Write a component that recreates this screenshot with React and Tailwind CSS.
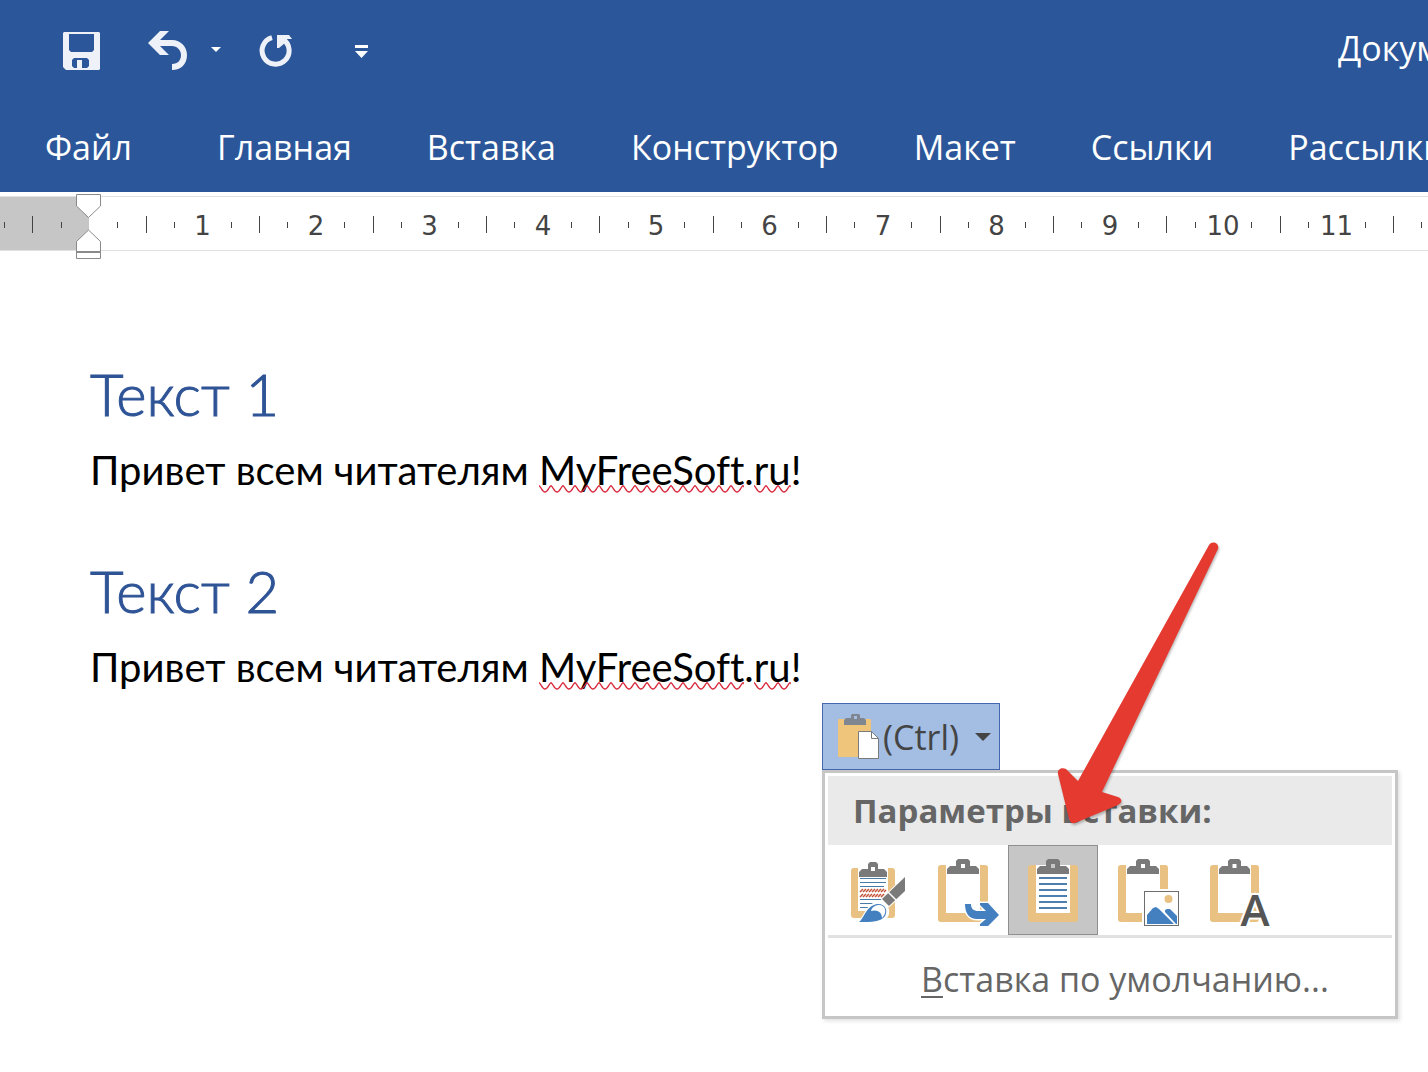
import React from 'react';

const TABS = ['Файл', 'Главная', 'Вставка', 'Конструктор', 'Макет', 'Ссылки', 'Рассылки'];

// One centimetre on the ruler, in pixels
const CM = 113.4;

const SaveIcon = () => (
    <svg width="40" height="40" viewBox="0 0 40 40" fill="#eef1f7">
        <path fillRule="evenodd" d="M2 2H37L38 3V39L37 40H4L1 37V3ZM7 4V20L9 22H30L32 20V4ZM12 28L10 30V36L12 38H15V30H20V38H25L27 36V30L25 28Z" />
    </svg>
);

const UndoIcon = () => (
    <svg width="42" height="40" viewBox="0 0 42 40">
        <path d="M14 1H23L14 10H26C35 10 41 17 41 25C41 34 35 40 26 40V34C32 34 35 30 35 25C35 20 31 16 26 16H14L23 25H14L2 13Z" fill="#eef1f7" />
    </svg>
);

const RedoIcon = () => (
    <svg width="36" height="36" viewBox="0 0 36 36">
        <path d="M14 5.600A13.500 13.500 0 1 0 24.500 7" fill="none" stroke="#eef1f7" strokeWidth="5" />
        <path d="M19 3H31L34 7H27V11L21 16H19Z" fill="#eef1f7" />
    </svg>
);

const Clip = ({ x = 29, y = 14, w = 32, hole = '#fff' }) => (
    <g>
        <path
            d={`M${x} ${y + 15}V${y + 10}L${x + 3} ${y + 7}H${x + 9}V${y + 2}L${x + 11} ${y}H${x + w - 11}L${x + w - 9} ${y + 2}V${y + 7}H${x + w - 3}L${x + w} ${y + 10}V${y + 15}Z`}
            fill="#7a7a7a"
        />
        <rect x={x + w / 2 - 2} y={y + 5} width="4" height="4" fill={hole} />
    </g>
);

const Board = ({ x = 20, w = 50 }) => (
    <g>
        <rect x={x} y="20" width={w} height="57" rx="3" fill="#e9c182" />
        <rect x={x + 8} y="20" width={w - 16} height="48" fill="#fff" />
    </g>
);

const KeepSourceIcon = () => (
    <svg width="90" height="90" viewBox="0 0 90 90">
        <rect x="23" y="23" width="44" height="50" rx="3" fill="#e9c182" />
        <rect x="30" y="22" width="30" height="44" fill="#fff" />
        <Clip x={31} y={17} w={28} />
        <path d="M32 33.500H58M32 37.500H58M32 41.500H56M32 54.500H58M32 58.500H50M32 62.500H44" stroke="#4a7ba6" strokeWidth="1" />
        <path
            d="M32 47L35 44M35 47L38 44M38 47L41 44M41 47L44 44M44 47L47 44M47 47L50 44M50 47L53 44M53 47L56 44M56 47L58 45M32 52L35 49M35 52L38 49M38 52L41 49M41 52L44 49M44 52L47 49M47 52L50 49M50 52L53 49M53 52L56 49M56 52L58 50"
            stroke="#c4533a"
            strokeWidth="1.500"
        />
        <path d="M77 32V46L61 61L54 54Z" fill="#7a7a7a" stroke="#fff" strokeWidth="2" paintOrder="stroke" />
        <path d="M60 47L68 55" stroke="#fff" strokeWidth="1.500" />
        <path d="M31 77C38 73 38 59 51 58C60 58 62 68 57 73C52 78 44 77 31 77Z" fill="#fff" stroke="#fff" strokeWidth="3" />
        <path d="M31 77C36 74 38 60 50 59C58 59 60 66 57 71C53 77 44 77 31 77Z" fill="#4480c0" />
        <path d="M43 66C45 59 55 58 57 64C58 68 56 71 54 73C54 67 49 64 43 66Z" fill="#fff" />
    </svg>
);

const MergeIcon = () => (
    <svg width="90" height="90" viewBox="0 0 90 90">
        <Board />
        <Clip />
        <path
            d="M47 59H53C53 64 56 66 60 66H68L62 60V58H70L81 70L70 81H62V79L68 74H59C51 74 47 68 47 59Z"
            fill="#4480c0"
            stroke="#fff"
            strokeWidth="3"
            paintOrder="stroke"
        />
    </svg>
);

const TextOnlyIcon = () => (
    <svg width="90" height="90" viewBox="0 0 90 90">
        <Board />
        <Clip hole="#c6c6c6" />
        <path d="M31 33H59M31 39H59M31 45H59M31 51H59M31 57H59M31 63H59" stroke="#4f7fae" strokeWidth="2" />
    </svg>
);

const PictureIcon = () => (
    <svg width="90" height="90" viewBox="0 0 90 90">
        <Board />
        <Clip />
        <rect x="44" y="44" width="39" height="39" fill="#fff" />
        <rect x="46.500" y="46.500" width="34" height="34" fill="#fff" stroke="#6e6e6e" />
        <circle cx="70.500" cy="54" r="4" fill="#e9c182" />
        <path d="M49 79V70L55 63L58 62L61 64L76 79Z" fill="#4480c0" />
        <path d="M67 67V65L69 64H72L79 71V79H78Z" fill="#4480c0" />
    </svg>
);

const KeepTextIcon = () => (
    <svg width="90" height="90" viewBox="0 0 90 90">
        <Board x={22} w={49} />
        <Clip x={31} w={31} />
        <text
            x="67"
            y="81"
            textAnchor="middle"
            fill="#555"
            stroke="#fff"
            strokeWidth="4"
            paintOrder="stroke"
            className="font-['Open_Sans',sans-serif] text-[44px] font-semibold"
        >
            A
        </text>
    </svg>
);

const PASTE_OPTIONS = [
    { label: 'Сохранить исходное форматирование', Icon: KeepSourceIcon },
    { label: 'Объединить форматирование', Icon: MergeIcon },
    { label: 'Использовать конечные стили', Icon: TextOnlyIcon, active: true },
    { label: 'Рисунок', Icon: PictureIcon },
    { label: 'Сохранить только текст', Icon: KeepTextIcon },
];

const Header = () => (
    <header className="h-48 overflow-hidden bg-[#2b579a] font-['Open_Sans','Noto_Sans',sans-serif] text-[34px] text-white">
        <div className="flex h-[100px] items-center pl-[62px]">
            <button type="button" aria-label="Сохранить"><SaveIcon /></button>
            <button type="button" aria-label="Отменить" className="ml-11"><UndoIcon /></button>
            <button type="button" aria-label="Список отмены" className="ml-5">
                <svg width="16" height="6" viewBox="0 0 16 6"><path d="M3 0H13L8 5Z" fill="#fff" /></svg>
            </button>
            <button type="button" aria-label="Повторить" className="ml-[34px]"><RedoIcon /></button>
            <button type="button" aria-label="Настройка панели" className="ml-[59px]">
                <svg width="16" height="16" viewBox="0 0 16 16" fill="#fff"><path d="M2 3H15V6H2ZM2 9H15L8.500 16Z" /></svg>
            </button>
            <span className="ml-auto w-[90px] overflow-hidden pb-1 whitespace-nowrap">Документ1</span>
        </div>
        <nav className="flex h-[94px] items-center gap-[75px] pl-[45px] whitespace-nowrap">
            {TABS.map((tab) => (
                <a key={tab} href="#" className="first:mr-[10px]">{tab}</a>
            ))}
        </nav>
    </header>
);

const Tick = ({ k }) => {
    const width = Math.round(((k + 1) * CM) / 4) - Math.round((k * CM) / 4);
    return (
        <div className="flex shrink-0 items-center justify-center" style={{ width }}>
            {k % 4 === 0
                ? <span className="pt-1">{k / 4}</span>
                : <span className={k % 2 === 0 ? 'h-[17px] w-px bg-[#444]' : 'h-[6px] w-px bg-[#444]'} />}
        </div>
    );
};

const Ruler = () => {
    const marks = Array.from({ length: 47 }, (_, i) => i + 1);
    return (
        <div className="relative pt-1">
            <div className="flex h-[55px] overflow-hidden border-y border-[#e1e1e1] font-['DejaVu_Sans',sans-serif] text-[26px] text-[#444]">
                <div className="flex w-[89px] shrink-0 justify-end bg-[#c6c6c6] pt-0.5 pr-[14px]">
                    {[-3, -2, -1].map((k) => <Tick key={k} k={k} />)}
                </div>
                <div className="flex min-w-0 flex-1 overflow-hidden pt-0.5 pl-[14px]">
                    {marks.map((k) => <Tick key={k} k={k} />)}
                </div>
            </div>
            {/* indent markers */}
            <svg className="absolute top-0.5 left-[76px]" width="26" height="66" viewBox="0 0 26 66" fill="#fff" stroke="#8a8a8a">
                <path d="M.5 .5H24.500V12L12.500 23.500L.5 12Z" />
                <path d="M12.500 36L24.500 47.500V64.500H.5V47.500Z" />
                <path d="M.5 58H24.500" strokeWidth="2" />
            </svg>
        </div>
    );
};

// Spelling squiggle under a word
const Misspelled = ({ id, children }) => (
    <span className="relative">
        {children}
        <svg className="absolute bottom-px left-0 h-2 w-full" aria-hidden="true">
            <defs>
                <pattern id={id} width="12" height="8" patternUnits="userSpaceOnUse">
                    <path d="M-1 0C2 1 3 7 6 7S10 1 13 0" fill="none" stroke="#d8283c" strokeWidth="1.300" />
                </pattern>
            </defs>
            <rect width="100%" height="8" fill={`url(#${id})`} />
        </svg>
    </span>
);

const Section = ({ n }) => (
    <section>
        <h1 className="text-[58px] leading-[72px] font-light text-[#2f5496] [-webkit-text-stroke:1px_#2f5496]">Текст {n}</h1>
        <p className="pt-1 text-[40px] leading-[72px] whitespace-nowrap text-black [font-variant-ligatures:none]">
            Привет всем читателям <Misspelled id={`wave-a${n}`}>MyFreeSoft</Misspelled>.<Misspelled id={`wave-b${n}`}>ru</Misspelled>!
        </p>
    </section>
);

const PasteMenu = () => (
    <div className="ml-[822px] w-[576px] font-['Open_Sans','Noto_Sans',sans-serif]">
        <button type="button" className="flex h-[67px] w-[178px] items-center border border-[#4467b0] bg-[#a3bde3] pl-[14px] text-[34px] text-[#444]">
            <svg width="46" height="48" viewBox="0 0 46 48" className="shrink-0">
                <rect x="1" y="6" width="33" height="38" rx="1" fill="#efc57c" />
                <path d="M7 12V7L9 5H14V2L15 1H22L23 2V5H27L29 7V12Z" fill="#7f8690" />
                <rect x="17" y="3" width="3" height="3" fill="#a3bde3" />
                <path d="M21.500 18.500H34.500L41.500 25.500V45.500H21.500Z" fill="#fff" stroke="#7a7a7a" />
                <path d="M34.500 18.500V25.500H41.500" fill="none" stroke="#7a7a7a" />
            </svg>
            <span className="pt-0.5">(Ctrl)</span>
            <svg width="16" height="8" viewBox="0 0 16 8" className="ml-4 shrink-0"><path d="M0 0H16L8 8Z" fill="#444" /></svg>
        </button>
        <div className="border-[3px] border-[#c6c6c6] bg-white p-[3px] shadow-[2px_2px_4px_rgba(0,0,0,0.12)]">
            <h2 className="h-[69px] bg-[#eaeaea] pl-[25px] text-[33px] leading-[70px] font-bold text-[#666]">Параметры вставки:</h2>
            <div className="flex">
                {PASTE_OPTIONS.map(({ label, Icon, active }) => (
                    <button
                        key={label}
                        type="button"
                        aria-label={label}
                        className={active ? 'bg-[#c6c6c6] outline outline-1 -outline-offset-1 outline-[#8f8f8f]' : 'bg-white'}
                    >
                        <Icon />
                    </button>
                ))}
            </div>
            <button type="button" className="block h-[78px] w-full border-t-[3px] border-[#e1e1e1] pt-2 pl-[93px] text-left text-[34px] text-[#666]">
                <span className="underline decoration-2 underline-offset-4">В</span>ставка по умолчанию...
            </button>
        </div>
    </div>
);

const App = () => {
    return (
        <div className="relative min-h-screen overflow-hidden bg-white">
            <Header />
            <Ruler />
            <main className="pt-[107px] font-['Lato',sans-serif]">
                <div className="flex flex-col gap-[49px] pl-[90px]">
                    <Section n={1} />
                    <Section n={2} />
                </div>
                <PasteMenu />
            </main>
            <svg className="pointer-events-none absolute top-[535px] left-[1050px] drop-shadow-[1px_2px_1px_rgba(0,0,0,0.25)]" width="180" height="295" viewBox="1050 535 180 295">
                <path
                    d="M1209 545C1212 540 1220 543 1218 549L1102 792L1118 797C1123 799 1122 803 1118 805L1075 823C1072 824 1070 822 1069 819L1058 774C1057 769 1062 767 1066 769L1078 781Z"
                    fill="#e53a30"
                />
            </svg>
        </div>
    );
};

export default App;
